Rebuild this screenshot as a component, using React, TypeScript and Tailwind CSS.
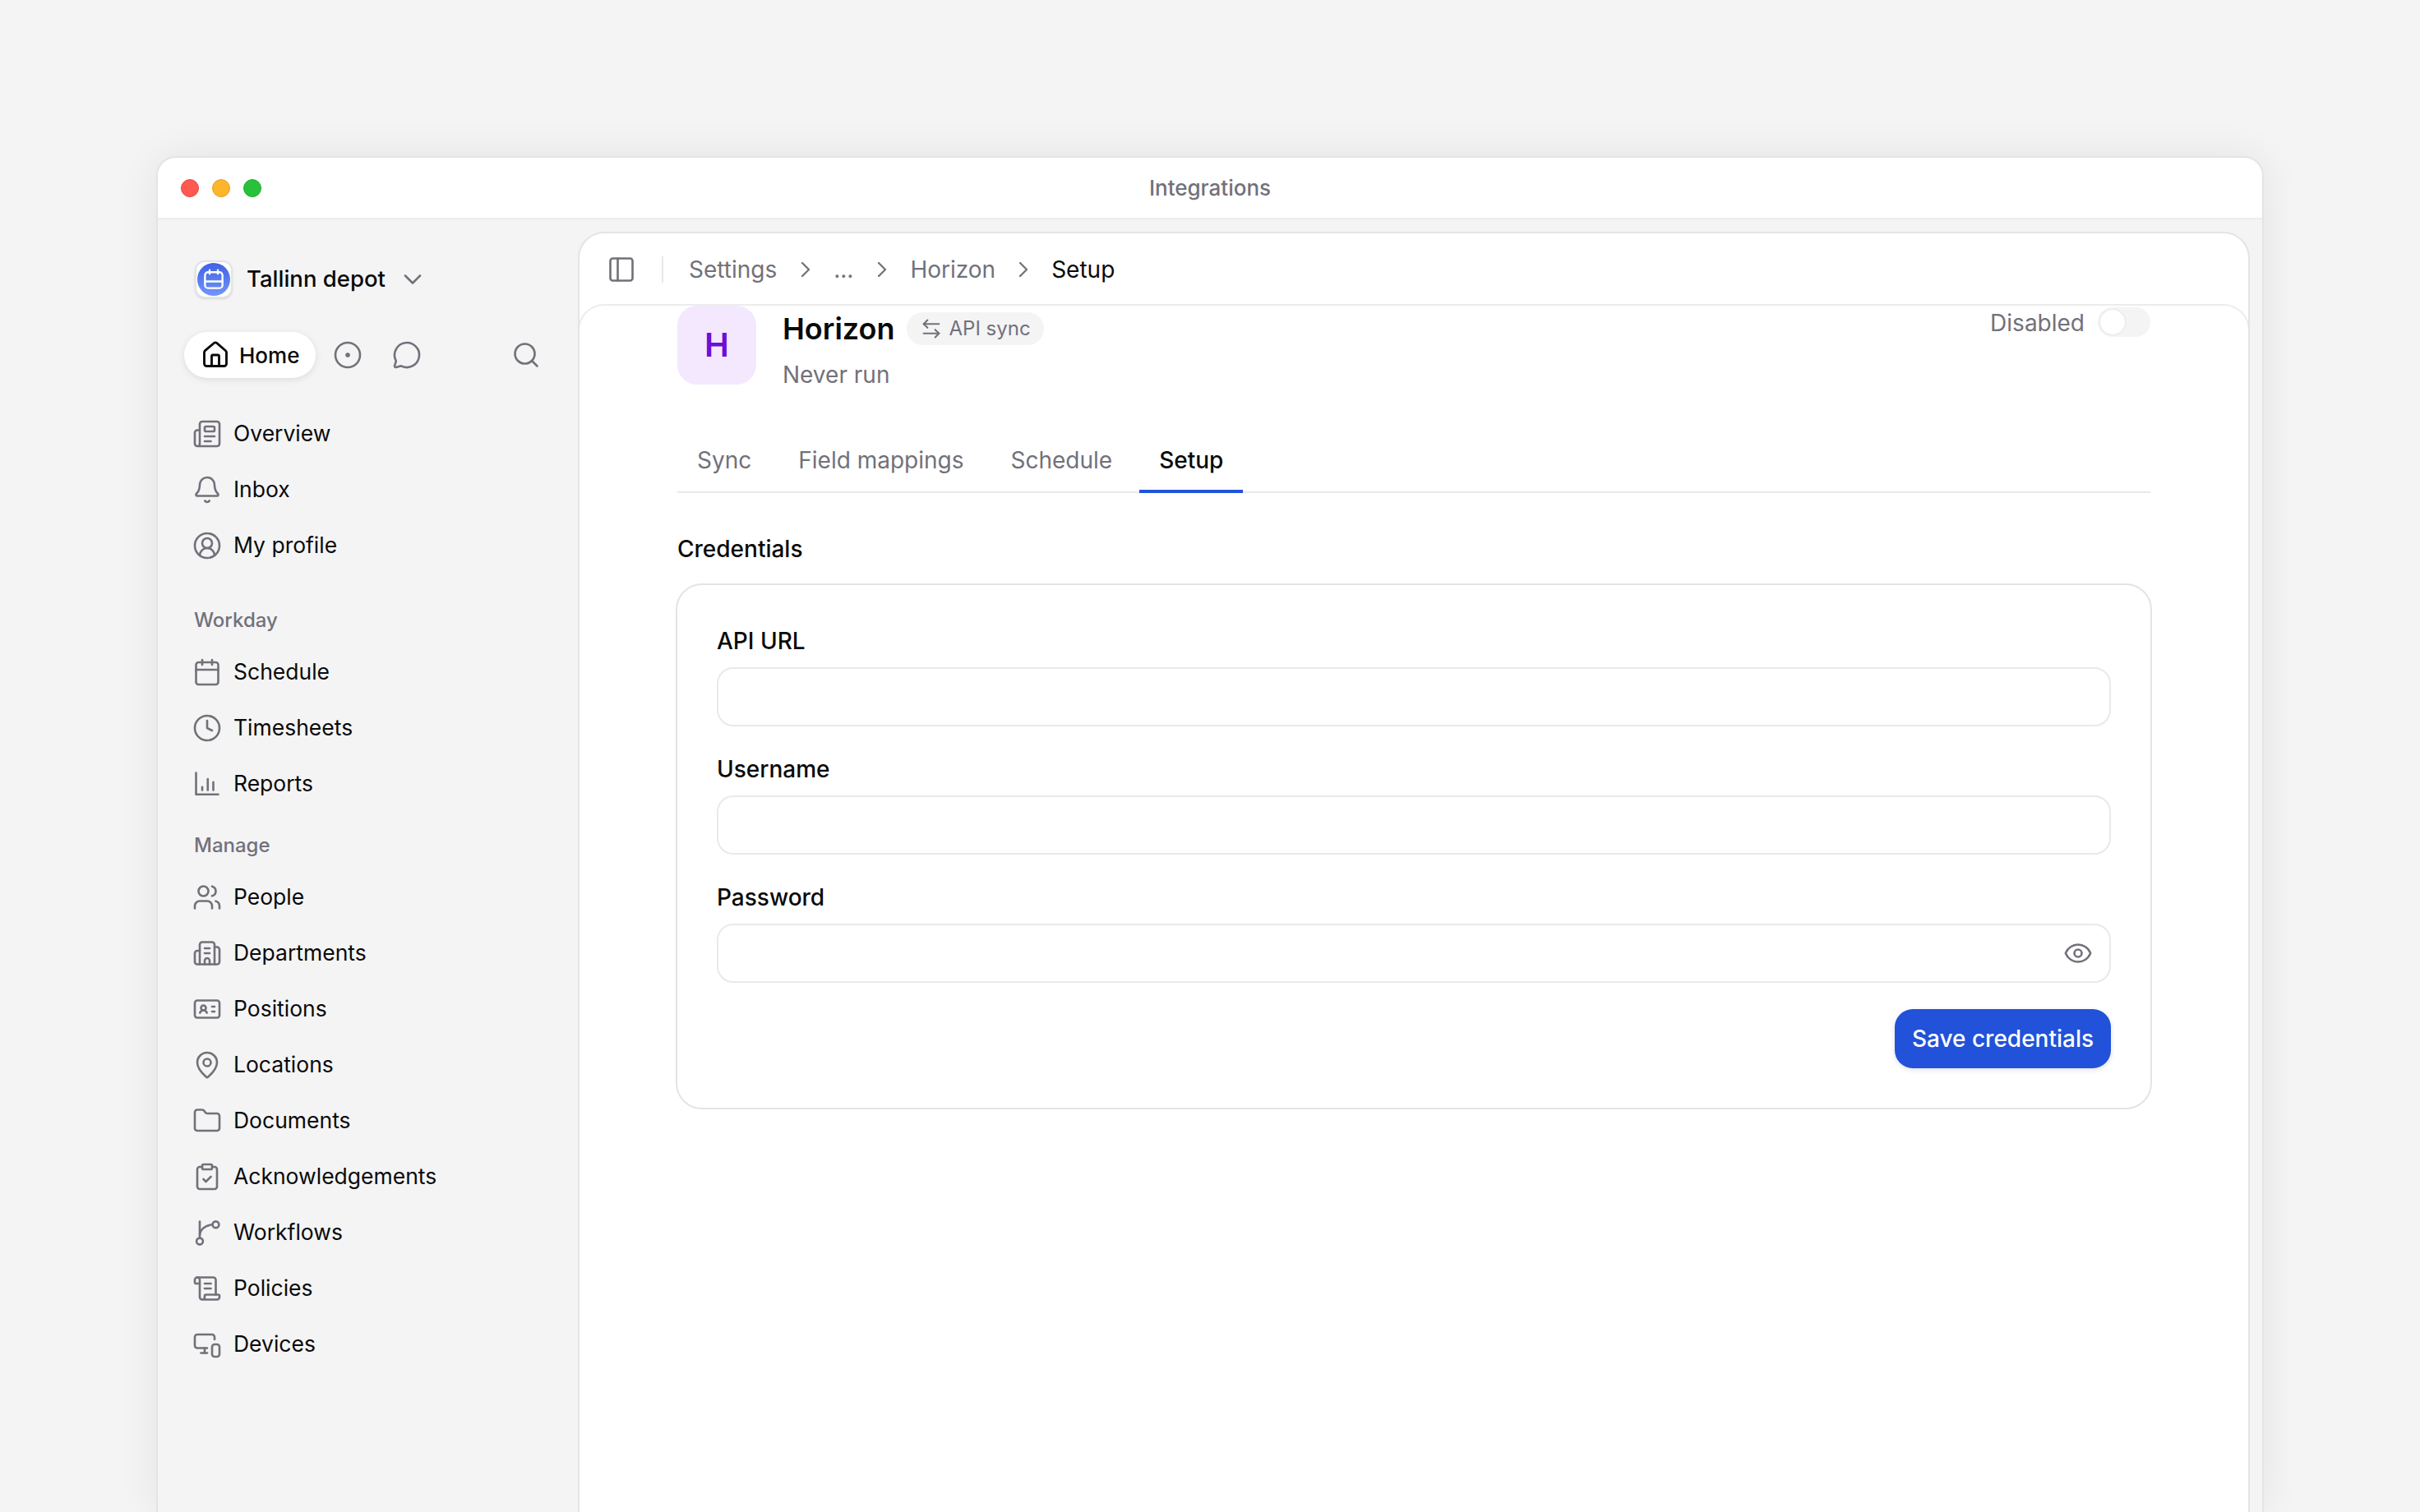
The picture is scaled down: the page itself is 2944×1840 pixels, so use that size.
import {
  ArrowLeftRight,
  Bell,
  Building2,
  Calendar,
  ChevronDown,
  ChevronRight,
  CircleDot,
  CircleUserRound,
  ClipboardCheck,
  Clock,
  Eye,
  Folder,
  House,
  IdCard,
  MapPin,
  MessageCircle,
  MonitorSmartphone,
  Newspaper,
  PanelLeft,
  ScrollText,
  Search,
  Users,
} from "lucide-react";
import type { ReactNode } from "react";

function ReportsIcon({ className }: { className?: string }) {
  return (
    <svg viewBox="0 0 24 24" fill="none" stroke="currentColor" strokeWidth="1.75" strokeLinecap="round" strokeLinejoin="round" className={className}>
      <path d="M3 3v17.5h18" />
      <path d="M8 17v-2.5" />
      <path d="M12.5 17V8" />
      <path d="M17 17v-6.5" />
    </svg>
  );
}

function WorkflowIcon({ className }: { className?: string }) {
  return (
    <svg viewBox="0 0 24 24" fill="none" stroke="currentColor" strokeWidth="1.75" strokeLinecap="round" strokeLinejoin="round" className={className}>
      <circle cx="6" cy="19" r="2.6" />
      <circle cx="19" cy="5.5" r="2.6" />
      <path d="M6 16.4V3" />
      <path d="M6 13.5c.6-4.200 4.400-7.400 10.400-8" />
    </svg>
  );
}

function DepotLogo() {
  return (
    <div className="flex h-[46px] w-[46px] items-center justify-center rounded-[12px] border-2 border-[#e4e4e7] bg-white shadow-sm">
      <div className="flex h-[40px] w-[40px] items-center justify-center rounded-full bg-gradient-to-b from-[#3f62e4] to-[#7394fb]">
        <svg viewBox="0 0 24 24" fill="none" stroke="white" strokeWidth="1.9" strokeLinecap="round" strokeLinejoin="round" className="h-[30px] w-[30px]">
          <rect x="3.500" y="5" width="17" height="15.500" rx="3" />
          <path d="M8 3v3.500M16 3v3.500M3.500 14h17" />
        </svg>
      </div>
    </div>
  );
}

const ICON = "h-[36px] w-[36px] shrink-0 text-[#71717a]";

function NavRow({ icon, label }: { icon: ReactNode; label: string }) {
  return (
    <div className="flex h-[68px] items-center gap-[14px] pl-[42px] text-[26.5px] text-[#0a0a0a]">
      {icon}
      <span>{label}</span>
    </div>
  );
}

function NavLabel({ children, className }: { children: string; className: string }) {
  return <div className={`flex h-[58px] items-center pl-[44px] text-[24px] font-[450] text-[#71717a] ${className}`}>{children}</div>;
}

function Sidebar() {
  return (
    <aside className="flex w-[511px] shrink-0 flex-col">
      <div className="mt-[50px] flex h-[46px] items-center pl-[45px]">
        <DepotLogo />
        <span className="ml-[17px] text-[27.5px] font-medium text-[#0a0a0a]">Tallinn depot</span>
        <ChevronDown className="ml-[15px] h-[36px] w-[36px] text-[#71717a]" strokeWidth={1.75} />
      </div>
      <div className="mt-[41px] flex h-[56px] items-center pl-[32px] pr-[45px]">
        <div className="flex h-[56px] w-[160px] items-center gap-[11px] rounded-full bg-white pl-[20px] shadow-[0_2px_8px_rgba(0,0,0,0.10)]">
          <House className="h-[36px] w-[36px] text-[#0a0a0a]" strokeWidth={1.9} />
          <span className="text-[26px] font-medium text-[#0a0a0a]">Home</span>
        </div>
        <CircleDot className={`${ICON} ml-[21px]`} strokeWidth={1.75} />
        <MessageCircle className={`${ICON} ml-[36px]`} strokeWidth={1.75} />
        <Search className={`${ICON} ml-auto`} strokeWidth={1.75} />
      </div>

      <nav className="mt-[34px] flex flex-col">
        <NavRow icon={<Newspaper className={ICON} strokeWidth={1.75} />} label="Overview" />
        <NavRow icon={<Bell className={ICON} strokeWidth={1.75} />} label="Inbox" />
        <NavRow icon={<CircleUserRound className={ICON} strokeWidth={1.75} />} label="My profile" />
        <NavLabel className="mt-[28px]">Workday</NavLabel>
        <NavRow icon={<Calendar className={ICON} strokeWidth={1.75} />} label="Schedule" />
        <NavRow icon={<Clock className={ICON} strokeWidth={1.75} />} label="Timesheets" />
        <NavRow icon={<ReportsIcon className={ICON} />} label="Reports" />
        <NavLabel className="mt-[12px]">Manage</NavLabel>
        <NavRow icon={<Users className={ICON} strokeWidth={1.75} />} label="People" />
        <NavRow icon={<Building2 className={ICON} strokeWidth={1.75} />} label="Departments" />
        <NavRow icon={<IdCard className={ICON} strokeWidth={1.75} />} label="Positions" />
        <NavRow icon={<MapPin className={ICON} strokeWidth={1.75} />} label="Locations" />
        <NavRow icon={<Folder className={ICON} strokeWidth={1.75} />} label="Documents" />
        <NavRow icon={<ClipboardCheck className={ICON} strokeWidth={1.75} />} label="Acknowledgements" />
        <NavRow icon={<WorkflowIcon className={ICON} />} label="Workflows" />
        <NavRow icon={<ScrollText className={ICON} strokeWidth={1.75} />} label="Policies" />
        <NavRow icon={<MonitorSmartphone className={ICON} strokeWidth={1.75} />} label="Devices" />
      </nav>
    </aside>
  );
}

function Crumbs() {
  const chevron = <ChevronRight className="h-[32px] w-[32px] text-[#71717a]" strokeWidth={1.75} />;
  return (
    <div className="flex h-[86px] items-center pl-[33px] pt-[2px] text-[28px] text-[#71717a]">
      <PanelLeft className="h-[36px] w-[36px]" strokeWidth={1.75} />
      <div className="ml-[31px] mr-[14px] h-[32px] w-[2px] bg-[#e8e8e8]" />
      <span className="ml-[17px]">Settings</span>
      <span className="ml-[19px]">{chevron}</span>
      <span className="ml-[18px]">...</span>
      <span className="ml-[19px]">{chevron}</span>
      <span className="ml-[18px]">Horizon</span>
      <span className="ml-[18px]">{chevron}</span>
      <span className="ml-[18px] text-[#0a0a0a]">Setup</span>
    </div>
  );
}

function Field({ label, children }: { label: string; children?: ReactNode }) {
  return (
    <div>
      <div className="h-[40px] text-[28px] font-[450] leading-[40px] text-[#0a0a0a]">{label}</div>
      <div className="mt-[12px] flex h-[72px] items-center justify-end rounded-[20px] border-2 border-[#e9e9e9] bg-white pr-[20px]">{children}</div>
    </div>
  );
}

function Tab({ label, active }: { label: string; active?: boolean }) {
  return (
    <div
      className={
        active
          ? "-mb-[2px] flex h-[80px] items-center border-y-4 border-t-transparent border-b-[#2152d9] px-[24px] font-medium text-[#0a0a0a]"
          : "-mb-[2px] flex h-[80px] items-center border-y-4 border-transparent px-[24px] text-[#71717a]"
      }
    >
      {label}
    </div>
  );
}

function Content() {
  return (
    <div className="-mx-[2px] flex-1 overflow-hidden rounded-t-[32px] border-2 border-b-0 border-[#ececec] bg-white">
      <div className="mx-auto w-[1792px]">
        <div className="flex items-start justify-between">
          <div className="flex">
            <div className="flex h-[96px] w-[96px] items-center justify-center rounded-[24px] bg-[#f3e8fd] text-[40px] font-semibold text-[#6d0fd8]">H</div>
            <div className="ml-[32px]">
              <div className="flex h-[56px] items-center">
                <span className="text-[36px] font-semibold text-[#0a0a0a]">Horizon</span>
                <span className="ml-[14px] flex h-[40px] items-center gap-[8px] rounded-full bg-[#f4f4f5] px-[16px] text-[24px] text-[#71717a]">
                  <ArrowLeftRight className="h-[28px] w-[28px]" strokeWidth={1.75} />
                  API sync
                </span>
              </div>
              <div className="mt-[8px] h-[40px] text-[28px] leading-[40px] text-[#71717a]">Never run</div>
            </div>
          </div>
          <div className="mt-[2px] flex h-[36px] items-center gap-[16px]">
            <span className="pt-[1px] text-[28px] text-[#71717a]">Disabled</span>
            <div className="flex h-[36px] w-[64px] items-center rounded-full bg-[#f4f4f5] pl-[3px]">
              <div className="h-[30px] w-[30px] rounded-full bg-white shadow-[0_0_3px_rgba(0,0,0,0.12)]" />
            </div>
          </div>
        </div>

        <div className="mt-[44px] flex gap-[9px] border-b-2 border-[#e9e9e9] text-[28px]">
          <Tab label="Sync" />
          <Tab label="Field mappings" />
          <Tab label="Schedule" />
          <Tab label="Setup" active />
        </div>

        <div className="mt-[48px] h-[40px] text-[28px] font-[450] leading-[40px] text-[#0a0a0a]">Credentials</div>
        <div className="-mx-[2px] mt-[22px] flex flex-col gap-[32px] rounded-[32px] border-2 border-[#e4e4e4] bg-white px-[48px] pb-[48px] pt-[48px]">
          <Field label="API URL" />
          <Field label="Username" />
          <Field label="Password">
            <Eye className="h-[36px] w-[36px] text-[#71717a]" strokeWidth={1.75} />
          </Field>
          <div className="flex justify-end">
            <div className="flex h-[72px] w-[263px] items-center justify-center rounded-[22px] bg-[#2152d9] text-[28px] font-medium text-white shadow-[0_2px_6px_rgba(0,0,0,0.12)]">
              Save credentials
            </div>
          </div>
        </div>
      </div>
    </div>
  );
}

export default function App() {
  return (
    <div className="flex h-[1840px] flex-col overflow-hidden bg-[#f4f4f4] px-[190px] pt-[190px] [font-family:Inter,sans-serif]">
      <div className="flex flex-1 flex-col overflow-hidden rounded-t-[24px] border-2 border-b-0 border-[#e4e4e4] bg-[#f4f4f5] shadow-[0_0_50px_rgba(0,0,0,0.07)]">
        <div className="relative flex h-[75px] shrink-0 items-center justify-center border-b-2 border-[#ececec] bg-white text-[26px] font-medium text-[#71717a]">
          <div className="absolute left-[28px] top-[26px] flex gap-[16px]">
            <div className="h-[22px] w-[22px] rounded-full border border-[#e5483f] bg-[#ff5a52]" />
            <div className="h-[22px] w-[22px] rounded-full border border-[#e3a026] bg-[#fdb52a]" />
            <div className="h-[22px] w-[22px] rounded-full border border-[#23ab34] bg-[#27c23a]" />
          </div>
          Integrations
        </div>
        <div className="flex min-h-0 flex-1">
          <Sidebar />
          <main className="mr-[15px] mt-[15px] flex flex-1 flex-col overflow-hidden rounded-t-[32px] border-2 border-b-0 border-[#e4e4e4] bg-white">
            <Crumbs />
            <Content />
          </main>
        </div>
      </div>
    </div>
  );
}
